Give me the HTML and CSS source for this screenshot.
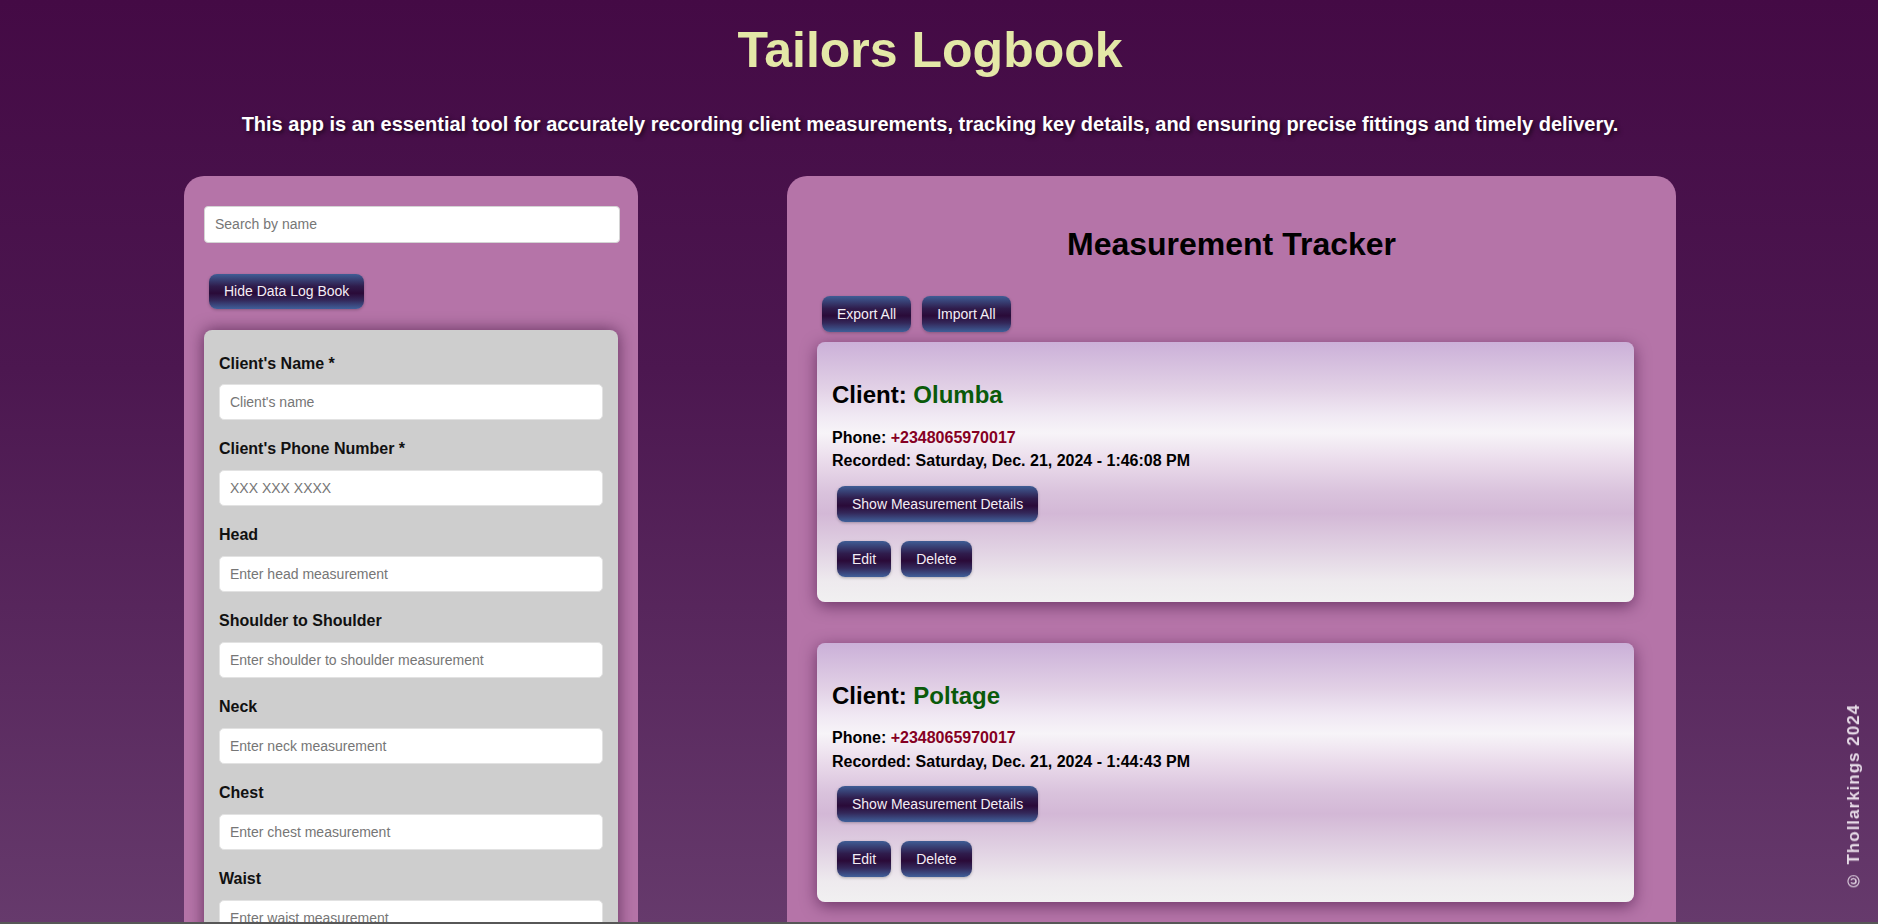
FILE: index.html
```html
<!DOCTYPE html>
<html lang="en">
<head>
<meta charset="utf-8">
<title>Tailors Logbook</title>
<link rel="stylesheet" href="styles.css">
</head>
<body>
<header class="header">
  <h1 class="title">Tailors Logbook</h1>
  <p class="subtitle">This app is an essential tool for accurately recording client measurements, tracking key details, and ensuring precise fittings and timely delivery.</p>
</header>
<main class="layout">
  <section class="panel panel-left">
    <input class="search" type="text" placeholder="Search by name">
    <div class="toggle-row"><button class="btn">Hide Data Log Book</button></div>
    <form class="form-card">
      <div class="group"><label>Client's Name *</label><input class="field" type="text" placeholder="Client's name"></div>
      <div class="group"><label>Client's Phone Number *</label><input class="field" type="text" placeholder="XXX XXX XXXX"></div>
      <div class="group"><label>Head</label><input class="field" type="text" placeholder="Enter head measurement"></div>
      <div class="group"><label>Shoulder to Shoulder</label><input class="field" type="text" placeholder="Enter shoulder to shoulder measurement"></div>
      <div class="group"><label>Neck</label><input class="field" type="text" placeholder="Enter neck measurement"></div>
      <div class="group"><label>Chest</label><input class="field" type="text" placeholder="Enter chest measurement"></div>
      <div class="group"><label>Waist</label><input class="field" type="text" placeholder="Enter waist measurement"></div>
      <div class="group"><label>Hip</label><input class="field" type="text" placeholder="Enter hip measurement"></div>
    </form>
  </section>
  <section class="panel panel-right">
    <h2 class="tracker-title">Measurement Tracker</h2>
    <div class="io-row"><button class="btn">Export All</button><button class="btn">Import All</button></div>
    <div class="cards">
      <article class="card">
        <h3 class="client">Client: <span class="client-name">Olumba</span></h3>
        <p class="meta">Phone: <span class="phone">+2348065970017</span></p>
        <p class="meta meta-last">Recorded: Saturday, Dec. 21, 2024 - 1:46:08 PM</p>
        <div class="actions"><button class="btn">Show Measurement Details</button></div>
        <div class="actions actions-second"><button class="btn">Edit</button><button class="btn">Delete</button></div>
      </article>
      <article class="card">
        <h3 class="client">Client: <span class="client-name">Poltage</span></h3>
        <p class="meta">Phone: <span class="phone">+2348065970017</span></p>
        <p class="meta meta-last">Recorded: Saturday, Dec. 21, 2024 - 1:44:43 PM</p>
        <div class="actions"><button class="btn">Show Measurement Details</button></div>
        <div class="actions actions-second"><button class="btn">Edit</button><button class="btn">Delete</button></div>
      </article>
    </div>
  </section>
</main>
<footer class="footer">© Thollarkings 2024</footer>
<div class="bottom-strip"></div>
</body>
</html>
```

FILE: styles.css
```css
html, body {
  margin: 0;
  padding: 0;
}
body {
  font-family: "Liberation Sans", Arial, sans-serif;
  background: linear-gradient(to bottom, #440a45 0%, #4c1750 40%, #663a6c 100%);
  background-attachment: fixed;
  min-height: 100vh;
  overflow: hidden;
  height: 924px;
}
.header {
  padding: 22px 18px 0 0;
  text-align: center;
}
.title {
  margin: 0;
  font-size: 50px;
  font-weight: bold;
  color: #e4e8a7;
  line-height: 57.5px;
}
.subtitle {
  margin: 33px 0 0;
  font-size: 20px;
  font-weight: bold;
  color: #ffffff;
  line-height: 22px;
  text-shadow: 2px 2px 4px rgba(0, 0, 0, 0.6);
}
.layout {
  display: flex;
  align-items: flex-start;
  gap: 149px;
  padding-left: 184px;
  margin-top: 41px;
}
.panel {
  background: #b574a8;
  border-radius: 20px;
  box-sizing: border-box;
}
.panel-left {
  width: 454px;
  padding: 30px 18px 40px 20px;
}
.panel-right {
  width: 889px;
  padding: 30px 30px 40px 30px;
}
.search {
  display: block;
  box-sizing: border-box;
  width: 416px;
  height: 37px;
  margin: 0;
  padding: 0 10px;
  border: 1px solid #d4d4d4;
  border-radius: 4px;
  background: #fff;
  font-family: "Liberation Sans", Arial, sans-serif;
  font-size: 14px;
  color: #333;
}
.search::placeholder, .field::placeholder {
  color: #767676;
}
.toggle-row {
  margin-top: 26px;
}
.btn {
  display: inline-block;
  margin: 5px;
  padding: 0 15px;
  height: 36px;
  border: none;
  border-radius: 8px;
  background: linear-gradient(to bottom, #3f5d95 0%, #2f1c4c 35%, #2a0a38 55%, #33285a 75%, #40609a 100%);
  color: #f3eef6;
  font-family: "Liberation Sans", Arial, sans-serif;
  font-size: 14px;
  line-height: 36px;
  box-shadow: 0 1px 3px rgba(0, 0, 0, 0.25);
  cursor: pointer;
}
.toggle-row .btn {
  height: 35px;
  line-height: 35px;
}
.form-card {
  margin-top: 16px;
  width: 414px;
  box-sizing: border-box;
  background: #cecece;
  border-radius: 8px;
  padding: 25px 15px 15px;
  box-shadow: 0 0 16px rgba(40, 0, 40, 0.6);
}
.group {
  margin-bottom: 20px;
}
.group label {
  display: block;
  font-size: 16px;
  font-weight: bold;
  color: #111;
  line-height: 18.4px;
  margin-bottom: 11.5px;
}
.field {
  display: block;
  box-sizing: border-box;
  width: 100%;
  height: 36px;
  margin: 0;
  padding: 0 10px;
  border: 1px solid #e2e2e2;
  border-radius: 5px;
  background: #fff;
  font-family: "Liberation Sans", Arial, sans-serif;
  font-size: 14px;
}
.tracker-title {
  margin: 20px 0 29px;
  text-align: center;
  font-size: 32px;
  font-weight: bold;
  color: #000;
  line-height: 36.8px;
}
.io-row {
  display: flex;
  gap: 1px;
}
.cards {
  display: flex;
  flex-direction: column;
  gap: 41px;
  margin-top: 5px;
  margin-right: 12px;
}
.card {
  border-radius: 8px;
  padding: 15px 15px 20px;
  background: linear-gradient(to bottom, #cbb0d8 0%, #e2d1e6 18%, #f0e8f3 28%, #f7f4f8 35%, #eadbeb 46%, #d9c2dc 58%, #d3b8d6 66%, #e1d2e3 80%, #eeeaee 92%, #f1f0f1 100%);
  box-shadow: 0 4px 16px rgba(50, 0, 50, 0.55);
}
.client {
  margin: 24px 0 20px;
  font-size: 24px;
  font-weight: bold;
  line-height: 27.6px;
  color: #000;
}
.client-name {
  color: #0a5a0a;
}
.meta {
  margin: 0 0 5px;
  font-size: 16px;
  font-weight: bold;
  line-height: 18.4px;
  color: #000;
}
.meta-last {
  margin-bottom: 0;
}
.phone {
  color: #860023;
}
.actions {
  margin-top: 10px;
  display: flex;
  gap: 0;
}
.actions-second {
  margin-top: 9px;
}
.footer {
  position: fixed;
  right: 14px;
  bottom: 34px;
  writing-mode: vertical-rl;
  transform: rotate(180deg);
  font-size: 17px;
  font-weight: bold;
  letter-spacing: 1px;
  color: #e6dbe7;
}
.bottom-strip {
  position: fixed;
  left: 0;
  right: 0;
  bottom: 0;
  height: 2px;
  background: #575757;
}
```
